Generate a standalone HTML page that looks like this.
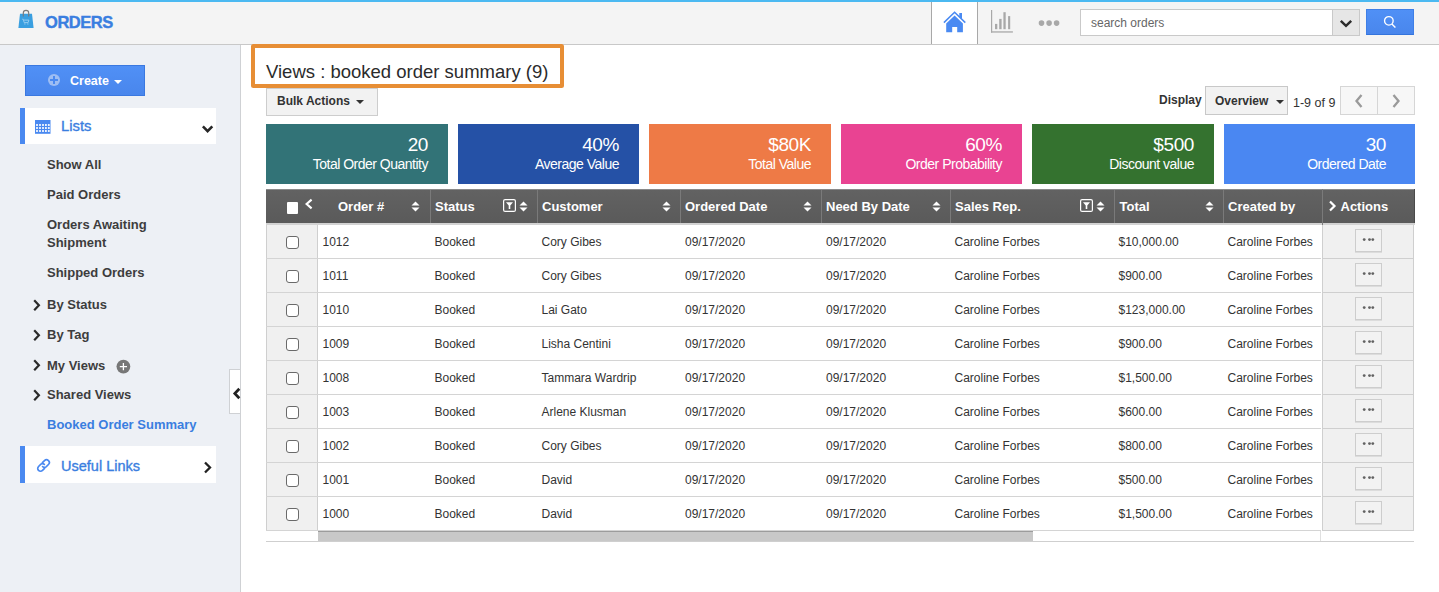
<!DOCTYPE html><html><head><meta charset="utf-8"><style>
*{box-sizing:border-box;margin:0;padding:0}
html,body{width:1439px;height:592px;overflow:hidden;background:#fff;font-family:"Liberation Sans",sans-serif;color:#333}
.a{position:absolute}
.nw{white-space:nowrap}
.sb{position:absolute;left:47px;font-size:13px;font-weight:bold;color:#3d3d3d;line-height:18px;white-space:nowrap}
.card{position:absolute;top:124px;height:60px;color:#fff}
.card .n{position:absolute;right:20px;top:9.5px;font-size:19px;letter-spacing:-0.4px;line-height:22px;white-space:nowrap}
.card .l{position:absolute;right:20px;top:31px;font-size:14px;letter-spacing:-0.5px;line-height:18px;white-space:nowrap}
.th{position:absolute;top:199px;font-size:13px;font-weight:bold;color:#fff;line-height:16px;white-space:nowrap}
.td{position:absolute;font-size:12px;color:#333;line-height:14px;white-space:nowrap}
.vl{position:absolute;width:1px}
.hl{position:absolute;height:1px}
</style></head><body>
<div class="a" style="left:0;top:0;width:1439px;height:2px;background:#4bb9f1"></div>
<div class="a" style="left:0;top:2px;width:1439px;height:42px;background:#f4f4f4"></div>
<div class="a" style="left:0;top:44px;width:1439px;height:1px;background:#c8c8c8"></div>
<svg class="a" style="left:17px;top:9px" width="18" height="20" viewBox="0 0 18 20">
<path d="M3 4.7 H15 L16.6 19 H1.4 Z" fill="#3a9fe0"/>
<path d="M6.3 7.6 V4 a2.7 2.7 0 0 1 5.4 0 V7.6" fill="none" stroke="#7a7a7a" stroke-width="1.15"/>
<path d="M5.3 10.2 h0.9 l1 3.4 h3.9 l0.8 -2.5 H6.8" fill="none" stroke="#a9d6f4" stroke-width="0.8"/>
<circle cx="7.9" cy="14.9" r="0.55" fill="#a9d6f4"/><circle cx="10.9" cy="14.9" r="0.55" fill="#a9d6f4"/>
</svg>
<div class="a nw" style="left:45px;top:14px;font-size:16.5px;letter-spacing:-0.45px;font-weight:bold;-webkit-text-stroke:0.4px #3a7ee0;color:#3a7ee0;line-height:16px">ORDERS</div>
<div class="a" style="left:931px;top:2px;width:47px;height:42px;background:#fff;border-left:1px solid #a8a8a8;border-right:1px solid #a8a8a8"></div>
<svg class="a" style="left:935px;top:5px" width="40" height="35" viewBox="0 0 40 35">
<path d="M24.3 8 H27 V14.6 L24.3 12 Z" fill="#4a8af2"/>
<path d="M8.9 17.6 L19.6 7.2 L30.3 17.6" fill="none" stroke="#4a8af2" stroke-width="1.5"/>
<path d="M11.2 18.6 L19.6 10.4 L27.9 18.6 V27.2 H22.2 V21.9 H17.2 V27.2 H11.2 Z" fill="#4a8af2"/>
</svg>
<svg class="a" style="left:985px;top:5px" width="40" height="35" viewBox="0 0 40 35"><g fill="#a8a8a8">
<rect x="6" y="5" width="1.2" height="22.6"/><rect x="6" y="26.3" width="21.9" height="1.3"/>
<rect x="10" y="18.9" width="2.3" height="5.3"/><rect x="14.2" y="13.9" width="2.4" height="10.3"/>
<rect x="18.4" y="7.2" width="2.3" height="17"/><rect x="23.1" y="11.1" width="2.1" height="13.1"/>
</g></svg>
<svg class="a" style="left:1030px;top:15px" width="40" height="16" viewBox="0 0 40 16"><g fill="#a8a8a8"><circle cx="11.5" cy="8.1" r="2.8"/><circle cx="19.1" cy="8.1" r="2.8"/><circle cx="26.6" cy="8.1" r="2.8"/></g></svg>
<div class="a" style="left:1080px;top:9px;width:280px;height:27px;background:#fff;border:1px solid #c9c9c9"></div>
<div class="a" style="left:1332px;top:9px;width:28px;height:27px;background:#e6e6e6;border:1px solid #c9c9c9"></div>
<svg class="a" style="left:1339px;top:19px" width="14" height="10" viewBox="0 0 14 10"><path d="M1.8 1.8 L7 6.8 L12.2 1.8" fill="none" stroke="#2b2b2b" stroke-width="2.5"/></svg>
<div class="a nw" style="left:1091px;top:16px;font-size:12px;color:#666;line-height:14px">search orders</div>
<div class="a" style="left:1366px;top:9px;width:48px;height:26px;background:linear-gradient(#5090f6,#4986ec);border:1px solid #3f7fe6;border-bottom-color:#3474dc"></div>
<svg class="a" style="left:1383px;top:15px" width="14" height="14" viewBox="0 0 14 14"><circle cx="5.85" cy="5.85" r="4.3" fill="none" stroke="#fff" stroke-width="1.35"/><path d="M8.9 8.9 L12.4 12.6" stroke="#fff" stroke-width="1.4"/></svg>
<div class="a" style="left:0;top:45px;width:240px;height:547px;background:#edf0f5"></div>
<div class="a" style="left:240px;top:45px;width:1px;height:547px;background:#cfd1d4"></div>
<div class="a" style="left:25px;top:65px;width:120px;height:31px;background:linear-gradient(#5090f6,#4986ec);border:1px solid #3a78e0"></div>
<div class="a" style="left:48px;top:74px;width:12px;height:12px;border-radius:50%;background:#9dbdf3"></div>
<div class="a" style="left:53px;top:76px;width:2px;height:8px;background:#4a89f0"></div>
<div class="a" style="left:50px;top:79px;width:8px;height:2px;background:#4a89f0"></div>
<div class="a nw" style="left:70px;top:74px;font-size:12.5px;font-weight:bold;color:#fff;line-height:14px">Create</div>
<div class="a" style="left:114px;top:80px;width:0;height:0;border-left:4px solid transparent;border-right:4px solid transparent;border-top:4px solid #fff"></div>
<div class="a" style="left:20px;top:108px;width:196px;height:36px;background:#fff"></div>
<div class="a" style="left:20px;top:108px;width:5px;height:36px;background:#4a89f0"></div>
<svg class="a" style="left:35px;top:120px" width="16" height="14" viewBox="0 0 16 14"><rect x="0" y="0" width="15.5" height="13.8" fill="#4a89f0"/><g fill="#fff"><rect x="1.1" y="4.1" width="1.8" height="1.8"/><rect x="4.1" y="4.1" width="1.8" height="1.8"/><rect x="7.1" y="4.1" width="1.8" height="1.8"/><rect x="10.0" y="4.1" width="1.8" height="1.8"/><rect x="12.9" y="4.1" width="1.8" height="1.8"/><rect x="1.1" y="7.1" width="1.8" height="1.8"/><rect x="4.1" y="7.1" width="1.8" height="1.8"/><rect x="7.1" y="7.1" width="1.8" height="1.8"/><rect x="10.0" y="7.1" width="1.8" height="1.8"/><rect x="12.9" y="7.1" width="1.8" height="1.8"/><rect x="1.1" y="10.1" width="1.8" height="1.8"/><rect x="4.1" y="10.1" width="1.8" height="1.8"/><rect x="7.1" y="10.1" width="1.8" height="1.8"/><rect x="10.0" y="10.1" width="1.8" height="1.8"/><rect x="12.9" y="10.1" width="1.8" height="1.8"/></g></svg>
<div class="a nw" style="left:61px;top:118px;font-size:14.8px;-webkit-text-stroke:0.35px #3a7ee0;color:#3a7ee0;line-height:16px">Lists</div>
<svg class="a" style="left:201px;top:124px" width="14" height="10" viewBox="0 0 14 10"><path d="M1.9 2.4 L6.6 7.1 L11.3 2.4" fill="none" stroke="#262626" stroke-width="2.6"/></svg>
<div class="sb" style="top:156px">Show All</div>
<div class="sb" style="top:186px">Paid Orders</div>
<div class="sb" style="top:216px">Orders Awaiting</div>
<div class="sb" style="top:234px">Shipment</div>
<div class="sb" style="top:264px">Shipped Orders</div>
<div class="sb" style="top:296px">By Status</div>
<svg class="a" style="left:32px;top:298.5px" width="10" height="13" viewBox="0 0 10 13"><path d="M2.2 1.3 L6.9 6.3 L2.2 11.3" fill="none" stroke="#2a2a2a" stroke-width="2.2"/></svg>
<div class="sb" style="top:326px">By Tag</div>
<svg class="a" style="left:32px;top:328.5px" width="10" height="13" viewBox="0 0 10 13"><path d="M2.2 1.3 L6.9 6.3 L2.2 11.3" fill="none" stroke="#2a2a2a" stroke-width="2.2"/></svg>
<div class="sb" style="top:356.5px">My Views</div>
<svg class="a" style="left:32px;top:359.0px" width="10" height="13" viewBox="0 0 10 13"><path d="M2.2 1.3 L6.9 6.3 L2.2 11.3" fill="none" stroke="#2a2a2a" stroke-width="2.2"/></svg>
<div class="sb" style="top:386px">Shared Views</div>
<svg class="a" style="left:32px;top:388.5px" width="10" height="13" viewBox="0 0 10 13"><path d="M2.2 1.3 L6.9 6.3 L2.2 11.3" fill="none" stroke="#2a2a2a" stroke-width="2.2"/></svg>
<svg class="a" style="left:116px;top:359px" width="15" height="15" viewBox="0 0 15 15"><circle cx="7.4" cy="7.6" r="6.9" fill="#777"/><path d="M3.8 7.6 H11 M7.4 4 V11.2" stroke="#fff" stroke-width="1.3"/></svg>
<div class="sb" style="top:416px;color:#3a7ee0">Booked Order Summary</div>
<div class="a" style="left:20px;top:446px;width:196px;height:37px;background:#fff"></div>
<div class="a" style="left:20px;top:446px;width:5px;height:37px;background:#4a89f0"></div>
<svg class="a" style="left:36px;top:458px" width="15" height="15" viewBox="0 0 15 15"><g fill="none" stroke="#4a89f0" stroke-width="1.7" stroke-linecap="round" transform="rotate(-45 7.5 7.5)">
<path d="M6.2 10.3 H3.3 A2.8 2.8 0 0 1 3.3 4.7 H6.6 A2.8 2.8 0 0 1 8.9 7.3"/><path d="M8.8 4.7 H11.7 A2.8 2.8 0 0 1 11.7 10.3 H8.4 A2.8 2.8 0 0 1 6.1 7.7"/></g></svg>
<div class="a nw" style="left:61px;top:458px;font-size:14.5px;-webkit-text-stroke:0.35px #3a7ee0;color:#3a7ee0;line-height:16px">Useful Links</div>
<svg class="a" style="left:203px;top:461px" width="10" height="13" viewBox="0 0 10 13"><path d="M2 1.5 L7 6.5 L2 11.5" fill="none" stroke="#222" stroke-width="2.3"/></svg>
<div class="a" style="left:229px;top:369px;width:12px;height:45px;background:#fff;border:1px solid #cfd1d4;border-right:none"></div>
<div class="a" style="left:240px;top:45px;width:1px;height:547px;background:#cfd1d4"></div>
<svg class="a" style="left:232px;top:387px" width="9" height="13" viewBox="0 0 9 13"><path d="M7.3 1.8 L2.8 6.5 L7.3 11.2" fill="none" stroke="#222" stroke-width="2.7"/></svg>
<div class="a" style="left:251px;top:44px;width:313px;height:44px;border:4px solid #e78e35;border-radius:2.5px;background:#fff"></div>
<div class="a nw" style="left:266px;top:62px;font-size:18.5px;color:#2b2b2b;line-height:20px">Views : booked order summary (9)</div>
<div class="a" style="left:266px;top:88px;width:112px;height:28px;background:#f2f2f2;border:1px solid #cdcdcd"></div>
<div class="a nw" style="left:277px;top:94px;font-size:12px;font-weight:bold;color:#333;line-height:14px">Bulk Actions</div>
<div class="a" style="left:356px;top:100px;width:0;height:0;border-left:4px solid transparent;border-right:4px solid transparent;border-top:4px solid #333"></div>
<div class="a nw" style="left:1159px;top:93px;font-size:12px;font-weight:bold;color:#333;line-height:14px">Display</div>
<div class="a" style="left:1205px;top:86px;width:83px;height:29px;background:#f2f2f2;border:1px solid #c8c8c8"></div>
<div class="a nw" style="left:1215px;top:94px;font-size:12px;font-weight:bold;color:#333;line-height:14px">Overview</div>
<div class="a" style="left:1276px;top:100px;width:0;height:0;border-left:4px solid transparent;border-right:4px solid transparent;border-top:4px solid #333"></div>
<div class="a nw" style="left:1293px;top:96px;font-size:12.5px;color:#333;line-height:14px">1-9 of 9</div>
<div class="a" style="left:1340px;top:86px;width:75px;height:29px;background:#f7f7f7;border:1px solid #d6d6d6"></div>
<div class="a" style="left:1377px;top:87px;width:1px;height:27px;background:#d6d6d6"></div>
<svg class="a" style="left:1354px;top:94px" width="10" height="14" viewBox="0 0 10 14"><path d="M7.5 1 L2.5 7 L7.5 13" fill="none" stroke="#9a9a9a" stroke-width="2.3"/></svg>
<svg class="a" style="left:1391px;top:94px" width="10" height="14" viewBox="0 0 10 14"><path d="M2.5 1 L7.5 7 L2.5 13" fill="none" stroke="#9a9a9a" stroke-width="2.3"/></svg>
<div class="card" style="left:266px;width:182px;background:#327377"><div class="n" style="right:20px">20</div><div class="l" style="right:20px">Total Order Quantity</div></div>
<div class="card" style="left:458px;width:181px;background:#2551a6"><div class="n" style="right:20px">40%</div><div class="l" style="right:20px">Average Value</div></div>
<div class="card" style="left:649px;width:182px;background:#ee7a46"><div class="n" style="right:20px">$80K</div><div class="l" style="right:20px">Total Value</div></div>
<div class="card" style="left:841px;width:181px;background:#e94392"><div class="n" style="right:20px">60%</div><div class="l" style="right:20px">Order Probability</div></div>
<div class="card" style="left:1032px;width:182px;background:#34722f"><div class="n" style="right:20px">$500</div><div class="l" style="right:20px">Discount value</div></div>
<div class="card" style="left:1224px;width:191px;background:#4a87f2"><div class="n" style="right:29px">30</div><div class="l" style="right:29px">Ordered Date</div></div>
<div class="a" style="left:266px;top:189px;width:1149px;height:1px;background:#8a8a8a"></div>
<div class="a" style="left:266px;top:190px;width:1149px;height:33px;background:linear-gradient(#626262,#5a5a5a)"></div>
<div class="a" style="left:266px;top:223px;width:1149px;height:2px;background:#d2d2d2"></div>
<div class="a" style="left:1414px;top:189px;width:1px;height:34px;background:#4a4a4a"></div>
<div class="vl" style="left:430px;top:190px;height:33px;background:#7a7a7a"></div>
<div class="vl" style="left:537px;top:190px;height:33px;background:#7a7a7a"></div>
<div class="vl" style="left:680px;top:190px;height:33px;background:#7a7a7a"></div>
<div class="vl" style="left:821px;top:190px;height:33px;background:#7a7a7a"></div>
<div class="vl" style="left:950px;top:190px;height:33px;background:#7a7a7a"></div>
<div class="vl" style="left:1114px;top:190px;height:33px;background:#7a7a7a"></div>
<div class="vl" style="left:1223px;top:190px;height:33px;background:#7a7a7a"></div>
<div class="vl" style="left:1322px;top:189px;height:36px;background:#7a7a7a"></div>
<div class="a" style="left:286.5px;top:201.6px;width:11.5px;height:12.3px;background:#fff;border-radius:1px"></div>
<svg class="a" style="left:304px;top:198px" width="10" height="13" viewBox="0 0 10 13"><path d="M7.6 1.6 L2.6 6 L7.6 10.4" fill="none" stroke="#fff" stroke-width="2.1"/></svg>
<div class="th" style="left:338px">Order #</div>
<svg class="a" style="left:410.6px;top:200.6px" width="9" height="11" viewBox="0 0 9 11"><path d="M4.5 0.5 L8.5 4.5 H0.5 Z M4.5 10.5 L8.5 6.5 H0.5 Z" fill="#fff"/></svg>
<div class="th" style="left:435px">Status</div>
<svg class="a" style="left:518.6px;top:200.6px" width="9" height="11" viewBox="0 0 9 11"><path d="M4.5 0.5 L8.5 4.5 H0.5 Z M4.5 10.5 L8.5 6.5 H0.5 Z" fill="#fff"/></svg>
<svg class="a" style="left:503px;top:199px" width="13" height="13" viewBox="0 0 13 13"><rect x="0.6" y="0.6" width="11.8" height="11.8" rx="1.5" fill="none" stroke="#fff" stroke-width="1.2"/><path d="M3 3.2 H10 L7.3 6.5 V10 H5.7 V6.5 Z" fill="#fff"/></svg>
<div class="th" style="left:542px">Customer</div>
<svg class="a" style="left:661.6px;top:200.6px" width="9" height="11" viewBox="0 0 9 11"><path d="M4.5 0.5 L8.5 4.5 H0.5 Z M4.5 10.5 L8.5 6.5 H0.5 Z" fill="#fff"/></svg>
<div class="th" style="left:685px">Ordered Date</div>
<svg class="a" style="left:802.6px;top:200.6px" width="9" height="11" viewBox="0 0 9 11"><path d="M4.5 0.5 L8.5 4.5 H0.5 Z M4.5 10.5 L8.5 6.5 H0.5 Z" fill="#fff"/></svg>
<div class="th" style="left:826px">Need By Date</div>
<svg class="a" style="left:931.6px;top:200.6px" width="9" height="11" viewBox="0 0 9 11"><path d="M4.5 0.5 L8.5 4.5 H0.5 Z M4.5 10.5 L8.5 6.5 H0.5 Z" fill="#fff"/></svg>
<div class="th" style="left:955px">Sales Rep.</div>
<svg class="a" style="left:1095.6px;top:200.6px" width="9" height="11" viewBox="0 0 9 11"><path d="M4.5 0.5 L8.5 4.5 H0.5 Z M4.5 10.5 L8.5 6.5 H0.5 Z" fill="#fff"/></svg>
<svg class="a" style="left:1080px;top:199px" width="13" height="13" viewBox="0 0 13 13"><rect x="0.6" y="0.6" width="11.8" height="11.8" rx="1.5" fill="none" stroke="#fff" stroke-width="1.2"/><path d="M3 3.2 H10 L7.3 6.5 V10 H5.7 V6.5 Z" fill="#fff"/></svg>
<div class="th" style="left:1119.5px">Total</div>
<svg class="a" style="left:1204.6px;top:200.6px" width="9" height="11" viewBox="0 0 9 11"><path d="M4.5 0.5 L8.5 4.5 H0.5 Z M4.5 10.5 L8.5 6.5 H0.5 Z" fill="#fff"/></svg>
<div class="th" style="left:1228px">Created by</div>
<svg class="a" style="left:1328px;top:200px" width="9" height="12" viewBox="0 0 9 12"><path d="M2 1.5 L6.5 6 L2 10.5" fill="none" stroke="#fff" stroke-width="2.2"/></svg>
<div class="th" style="left:1340.5px">Actions</div>
<div class="a" style="left:266px;top:225px;width:52px;height:306px;background:#f0f0f0"></div>
<div class="a" style="left:1322px;top:225px;width:92px;height:306px;background:#f0f0f0"></div>
<div class="vl" style="left:266px;top:225px;height:306px;background:#cfcfcf"></div>
<div class="vl" style="left:317px;top:225px;height:306px;background:#cfcfcf"></div>
<div class="vl" style="left:1322px;top:225px;height:306px;background:#cfcfcf"></div>
<div class="vl" style="left:1413px;top:225px;height:306px;background:#cfcfcf"></div>
<div class="hl" style="left:266px;top:258px;width:1055px;background:#d4d4d4"></div>
<div class="hl" style="left:1322px;top:258px;width:92px;background:#cfcfcf"></div>
<div class="a" style="left:286px;top:236px;width:13px;height:13px;background:#fff;border:1.3px solid #6a6a6a;border-radius:3px"></div>
<div class="td" style="left:322.5px;top:235px">1012</div>
<div class="td" style="left:434.5px;top:235px">Booked</div>
<div class="td" style="left:541.5px;top:235px">Cory Gibes</div>
<div class="td" style="left:685px;top:235px">09/17/2020</div>
<div class="td" style="left:826px;top:235px">09/17/2020</div>
<div class="td" style="left:954.5px;top:235px">Caroline Forbes</div>
<div class="td" style="left:1118.5px;top:235px">$10,000.00</div>
<div class="td" style="left:1227.5px;top:235px">Caroline Forbes</div>
<div class="a" style="left:1355px;top:229px;width:27px;height:23px;background:#f2f2f2;border:1px solid #cdcdcd;box-shadow:0 1px 0 #dcdcdc"></div>
<svg class="a" style="left:1360px;top:235px" width="16" height="9" viewBox="0 0 16 9"><g fill="#626262"><circle cx="4.2" cy="4.6" r="1.4"/><circle cx="9.5" cy="4.6" r="1.4"/><circle cx="12.8" cy="4.6" r="1.4"/></g></svg>
<div class="hl" style="left:266px;top:292px;width:1055px;background:#d4d4d4"></div>
<div class="hl" style="left:1322px;top:292px;width:92px;background:#cfcfcf"></div>
<div class="a" style="left:286px;top:270px;width:13px;height:13px;background:#fff;border:1.3px solid #6a6a6a;border-radius:3px"></div>
<div class="td" style="left:322.5px;top:269px">1011</div>
<div class="td" style="left:434.5px;top:269px">Booked</div>
<div class="td" style="left:541.5px;top:269px">Cory Gibes</div>
<div class="td" style="left:685px;top:269px">09/17/2020</div>
<div class="td" style="left:826px;top:269px">09/17/2020</div>
<div class="td" style="left:954.5px;top:269px">Caroline Forbes</div>
<div class="td" style="left:1118.5px;top:269px">$900.00</div>
<div class="td" style="left:1227.5px;top:269px">Caroline Forbes</div>
<div class="a" style="left:1355px;top:263px;width:27px;height:23px;background:#f2f2f2;border:1px solid #cdcdcd;box-shadow:0 1px 0 #dcdcdc"></div>
<svg class="a" style="left:1360px;top:269px" width="16" height="9" viewBox="0 0 16 9"><g fill="#626262"><circle cx="4.2" cy="4.6" r="1.4"/><circle cx="9.5" cy="4.6" r="1.4"/><circle cx="12.8" cy="4.6" r="1.4"/></g></svg>
<div class="hl" style="left:266px;top:326px;width:1055px;background:#d4d4d4"></div>
<div class="hl" style="left:1322px;top:326px;width:92px;background:#cfcfcf"></div>
<div class="a" style="left:286px;top:304px;width:13px;height:13px;background:#fff;border:1.3px solid #6a6a6a;border-radius:3px"></div>
<div class="td" style="left:322.5px;top:303px">1010</div>
<div class="td" style="left:434.5px;top:303px">Booked</div>
<div class="td" style="left:541.5px;top:303px">Lai Gato</div>
<div class="td" style="left:685px;top:303px">09/17/2020</div>
<div class="td" style="left:826px;top:303px">09/17/2020</div>
<div class="td" style="left:954.5px;top:303px">Caroline Forbes</div>
<div class="td" style="left:1118.5px;top:303px">$123,000.00</div>
<div class="td" style="left:1227.5px;top:303px">Caroline Forbes</div>
<div class="a" style="left:1355px;top:297px;width:27px;height:23px;background:#f2f2f2;border:1px solid #cdcdcd;box-shadow:0 1px 0 #dcdcdc"></div>
<svg class="a" style="left:1360px;top:303px" width="16" height="9" viewBox="0 0 16 9"><g fill="#626262"><circle cx="4.2" cy="4.6" r="1.4"/><circle cx="9.5" cy="4.6" r="1.4"/><circle cx="12.8" cy="4.6" r="1.4"/></g></svg>
<div class="hl" style="left:266px;top:360px;width:1055px;background:#d4d4d4"></div>
<div class="hl" style="left:1322px;top:360px;width:92px;background:#cfcfcf"></div>
<div class="a" style="left:286px;top:338px;width:13px;height:13px;background:#fff;border:1.3px solid #6a6a6a;border-radius:3px"></div>
<div class="td" style="left:322.5px;top:337px">1009</div>
<div class="td" style="left:434.5px;top:337px">Booked</div>
<div class="td" style="left:541.5px;top:337px">Lisha Centini</div>
<div class="td" style="left:685px;top:337px">09/17/2020</div>
<div class="td" style="left:826px;top:337px">09/17/2020</div>
<div class="td" style="left:954.5px;top:337px">Caroline Forbes</div>
<div class="td" style="left:1118.5px;top:337px">$900.00</div>
<div class="td" style="left:1227.5px;top:337px">Caroline Forbes</div>
<div class="a" style="left:1355px;top:331px;width:27px;height:23px;background:#f2f2f2;border:1px solid #cdcdcd;box-shadow:0 1px 0 #dcdcdc"></div>
<svg class="a" style="left:1360px;top:337px" width="16" height="9" viewBox="0 0 16 9"><g fill="#626262"><circle cx="4.2" cy="4.6" r="1.4"/><circle cx="9.5" cy="4.6" r="1.4"/><circle cx="12.8" cy="4.6" r="1.4"/></g></svg>
<div class="hl" style="left:266px;top:394px;width:1055px;background:#d4d4d4"></div>
<div class="hl" style="left:1322px;top:394px;width:92px;background:#cfcfcf"></div>
<div class="a" style="left:286px;top:372px;width:13px;height:13px;background:#fff;border:1.3px solid #6a6a6a;border-radius:3px"></div>
<div class="td" style="left:322.5px;top:371px">1008</div>
<div class="td" style="left:434.5px;top:371px">Booked</div>
<div class="td" style="left:541.5px;top:371px">Tammara Wardrip</div>
<div class="td" style="left:685px;top:371px">09/17/2020</div>
<div class="td" style="left:826px;top:371px">09/17/2020</div>
<div class="td" style="left:954.5px;top:371px">Caroline Forbes</div>
<div class="td" style="left:1118.5px;top:371px">$1,500.00</div>
<div class="td" style="left:1227.5px;top:371px">Caroline Forbes</div>
<div class="a" style="left:1355px;top:365px;width:27px;height:23px;background:#f2f2f2;border:1px solid #cdcdcd;box-shadow:0 1px 0 #dcdcdc"></div>
<svg class="a" style="left:1360px;top:371px" width="16" height="9" viewBox="0 0 16 9"><g fill="#626262"><circle cx="4.2" cy="4.6" r="1.4"/><circle cx="9.5" cy="4.6" r="1.4"/><circle cx="12.8" cy="4.6" r="1.4"/></g></svg>
<div class="hl" style="left:266px;top:428px;width:1055px;background:#d4d4d4"></div>
<div class="hl" style="left:1322px;top:428px;width:92px;background:#cfcfcf"></div>
<div class="a" style="left:286px;top:406px;width:13px;height:13px;background:#fff;border:1.3px solid #6a6a6a;border-radius:3px"></div>
<div class="td" style="left:322.5px;top:405px">1003</div>
<div class="td" style="left:434.5px;top:405px">Booked</div>
<div class="td" style="left:541.5px;top:405px">Arlene Klusman</div>
<div class="td" style="left:685px;top:405px">09/17/2020</div>
<div class="td" style="left:826px;top:405px">09/17/2020</div>
<div class="td" style="left:954.5px;top:405px">Caroline Forbes</div>
<div class="td" style="left:1118.5px;top:405px">$600.00</div>
<div class="td" style="left:1227.5px;top:405px">Caroline Forbes</div>
<div class="a" style="left:1355px;top:399px;width:27px;height:23px;background:#f2f2f2;border:1px solid #cdcdcd;box-shadow:0 1px 0 #dcdcdc"></div>
<svg class="a" style="left:1360px;top:405px" width="16" height="9" viewBox="0 0 16 9"><g fill="#626262"><circle cx="4.2" cy="4.6" r="1.4"/><circle cx="9.5" cy="4.6" r="1.4"/><circle cx="12.8" cy="4.6" r="1.4"/></g></svg>
<div class="hl" style="left:266px;top:462px;width:1055px;background:#d4d4d4"></div>
<div class="hl" style="left:1322px;top:462px;width:92px;background:#cfcfcf"></div>
<div class="a" style="left:286px;top:440px;width:13px;height:13px;background:#fff;border:1.3px solid #6a6a6a;border-radius:3px"></div>
<div class="td" style="left:322.5px;top:439px">1002</div>
<div class="td" style="left:434.5px;top:439px">Booked</div>
<div class="td" style="left:541.5px;top:439px">Cory Gibes</div>
<div class="td" style="left:685px;top:439px">09/17/2020</div>
<div class="td" style="left:826px;top:439px">09/17/2020</div>
<div class="td" style="left:954.5px;top:439px">Caroline Forbes</div>
<div class="td" style="left:1118.5px;top:439px">$800.00</div>
<div class="td" style="left:1227.5px;top:439px">Caroline Forbes</div>
<div class="a" style="left:1355px;top:433px;width:27px;height:23px;background:#f2f2f2;border:1px solid #cdcdcd;box-shadow:0 1px 0 #dcdcdc"></div>
<svg class="a" style="left:1360px;top:439px" width="16" height="9" viewBox="0 0 16 9"><g fill="#626262"><circle cx="4.2" cy="4.6" r="1.4"/><circle cx="9.5" cy="4.6" r="1.4"/><circle cx="12.8" cy="4.6" r="1.4"/></g></svg>
<div class="hl" style="left:266px;top:496px;width:1055px;background:#d4d4d4"></div>
<div class="hl" style="left:1322px;top:496px;width:92px;background:#cfcfcf"></div>
<div class="a" style="left:286px;top:474px;width:13px;height:13px;background:#fff;border:1.3px solid #6a6a6a;border-radius:3px"></div>
<div class="td" style="left:322.5px;top:473px">1001</div>
<div class="td" style="left:434.5px;top:473px">Booked</div>
<div class="td" style="left:541.5px;top:473px">David</div>
<div class="td" style="left:685px;top:473px">09/17/2020</div>
<div class="td" style="left:826px;top:473px">09/17/2020</div>
<div class="td" style="left:954.5px;top:473px">Caroline Forbes</div>
<div class="td" style="left:1118.5px;top:473px">$500.00</div>
<div class="td" style="left:1227.5px;top:473px">Caroline Forbes</div>
<div class="a" style="left:1355px;top:467px;width:27px;height:23px;background:#f2f2f2;border:1px solid #cdcdcd;box-shadow:0 1px 0 #dcdcdc"></div>
<svg class="a" style="left:1360px;top:473px" width="16" height="9" viewBox="0 0 16 9"><g fill="#626262"><circle cx="4.2" cy="4.6" r="1.4"/><circle cx="9.5" cy="4.6" r="1.4"/><circle cx="12.8" cy="4.6" r="1.4"/></g></svg>
<div class="hl" style="left:266px;top:530px;width:1055px;background:#d4d4d4"></div>
<div class="hl" style="left:1322px;top:530px;width:92px;background:#cfcfcf"></div>
<div class="a" style="left:286px;top:508px;width:13px;height:13px;background:#fff;border:1.3px solid #6a6a6a;border-radius:3px"></div>
<div class="td" style="left:322.5px;top:507px">1000</div>
<div class="td" style="left:434.5px;top:507px">Booked</div>
<div class="td" style="left:541.5px;top:507px">David</div>
<div class="td" style="left:685px;top:507px">09/17/2020</div>
<div class="td" style="left:826px;top:507px">09/17/2020</div>
<div class="td" style="left:954.5px;top:507px">Caroline Forbes</div>
<div class="td" style="left:1118.5px;top:507px">$1,500.00</div>
<div class="td" style="left:1227.5px;top:507px">Caroline Forbes</div>
<div class="a" style="left:1355px;top:501px;width:27px;height:23px;background:#f2f2f2;border:1px solid #cdcdcd;box-shadow:0 1px 0 #dcdcdc"></div>
<svg class="a" style="left:1360px;top:507px" width="16" height="9" viewBox="0 0 16 9"><g fill="#626262"><circle cx="4.2" cy="4.6" r="1.4"/><circle cx="9.5" cy="4.6" r="1.4"/><circle cx="12.8" cy="4.6" r="1.4"/></g></svg>
<div class="a" style="left:318px;top:531px;width:1003px;height:10px;background:#fff;border-right:1px solid #e0e0e0"></div>
<div class="a" style="left:318px;top:531px;width:715px;height:10px;background:#c8c8c8;border-top:1px solid #9c9c9c"></div>
<div class="hl" style="left:266px;top:541px;width:1148px;background:#cfcfcf"></div>
</body></html>
